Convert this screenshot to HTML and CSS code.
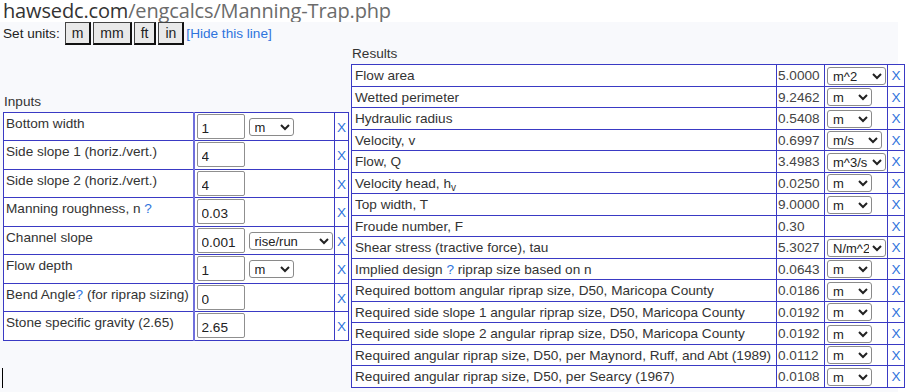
FILE: index.html
```html
<!DOCTYPE html>
<html>
<head>
<meta charset="utf-8">
<link rel="stylesheet" href="styles.css">
</head>
<body>
<div class="urlbar"><span class="host">hawsedc.com</span>/engcalcs/Manning-Trap.php</div>
<div class="page">
  <div class="units">
    <span class="units-label">Set units:</span>
    <button class="ubtn">m</button><button class="ubtn">mm</button><button class="ubtn">ft</button><button class="ubtn">in</button>
    <a class="link hide">[Hide this line]</a>
  </div>
  <div class="cols">
    <div class="col-in">
      <div class="caption">Inputs</div>
      <table class="tin">
        <colgroup><col class="c-lbl"><col class="c-fld"><col class="c-x"></colgroup>
        <tr><td class="lbl">Bottom width</td><td class="fld"><input class="num" value="1"><select class="sel-s"><option>m</option></select></td><td class="x">X</td></tr>
        <tr><td class="lbl">Side slope 1 (horiz./vert.)</td><td class="fld"><input class="num" value="4"></td><td class="x">X</td></tr>
        <tr><td class="lbl">Side slope 2 (horiz./vert.)</td><td class="fld"><input class="num" value="4"></td><td class="x">X</td></tr>
        <tr><td class="lbl">Manning roughness, n <a class="link">?</a></td><td class="fld"><input class="num" value="0.03"></td><td class="x">X</td></tr>
        <tr><td class="lbl">Channel slope</td><td class="fld"><input class="num" value="0.001"><select class="sel-l"><option>rise/run</option></select></td><td class="x">X</td></tr>
        <tr><td class="lbl">Flow depth</td><td class="fld"><input class="num" value="1"><select class="sel-s"><option>m</option></select></td><td class="x">X</td></tr>
        <tr><td class="lbl">Bend Angle<a class="link">?</a> (for riprap sizing)</td><td class="fld"><input class="num" value="0"></td><td class="x">X</td></tr>
        <tr><td class="lbl">Stone specific gravity (2.65)</td><td class="fld"><input class="num" value="2.65"></td><td class="x">X</td></tr>
      </table>
    </div>
    <div class="col-out">
      <div class="caption">Results</div>
      <table class="tout">
        <colgroup><col class="c-rl"><col class="c-rv"><col class="c-ru"><col class="c-rx"></colgroup>
        <tr><td class="rl">Flow area</td><td class="rv">5.0000</td><td class="ru"><select class="sel-r"><option>m^2</option></select></td><td class="rx">X</td></tr>
        <tr><td class="rl">Wetted perimeter</td><td class="rv">9.2462</td><td class="ru"><select class="sel-r sel-m"><option>m</option></select></td><td class="rx">X</td></tr>
        <tr><td class="rl">Hydraulic radius</td><td class="rv">0.5408</td><td class="ru"><select class="sel-r sel-m"><option>m</option></select></td><td class="rx">X</td></tr>
        <tr><td class="rl">Velocity, v</td><td class="rv">0.6997</td><td class="ru"><select class="sel-r sel-ms"><option>m/s</option></select></td><td class="rx">X</td></tr>
        <tr><td class="rl">Flow, Q</td><td class="rv">3.4983</td><td class="ru"><select class="sel-r"><option>m^3/s</option></select></td><td class="rx">X</td></tr>
        <tr><td class="rl">Velocity head, h<sub>v</sub></td><td class="rv">0.0250</td><td class="ru"><select class="sel-r sel-m"><option>m</option></select></td><td class="rx">X</td></tr>
        <tr><td class="rl">Top width, T</td><td class="rv">9.0000</td><td class="ru"><select class="sel-r sel-m"><option>m</option></select></td><td class="rx">X</td></tr>
        <tr><td class="rl">Froude number, F</td><td class="rv">0.30</td><td class="ru"></td><td class="rx">X</td></tr>
        <tr><td class="rl">Shear stress (tractive force), tau</td><td class="rv">5.3027</td><td class="ru"><select class="sel-r"><option>N/m^2</option></select></td><td class="rx">X</td></tr>
        <tr><td class="rl">Implied design <a class="link">?</a> riprap size based on n</td><td class="rv">0.0643</td><td class="ru"><select class="sel-r sel-m"><option>m</option></select></td><td class="rx">X</td></tr>
        <tr><td class="rl">Required bottom angular riprap size, D50, Maricopa County</td><td class="rv">0.0186</td><td class="ru"><select class="sel-r sel-m"><option>m</option></select></td><td class="rx">X</td></tr>
        <tr><td class="rl">Required side slope 1 angular riprap size, D50, Maricopa County</td><td class="rv">0.0192</td><td class="ru"><select class="sel-r sel-m"><option>m</option></select></td><td class="rx">X</td></tr>
        <tr><td class="rl">Required side slope 2 angular riprap size, D50, Maricopa County</td><td class="rv">0.0192</td><td class="ru"><select class="sel-r sel-m"><option>m</option></select></td><td class="rx">X</td></tr>
        <tr><td class="rl">Required angular riprap size, D50, per Maynord, Ruff, and Abt (1989)</td><td class="rv">0.0112</td><td class="ru"><select class="sel-r sel-m"><option>m</option></select></td><td class="rx">X</td></tr>
        <tr><td class="rl">Required angular riprap size, D50, per Searcy (1967)</td><td class="rv">0.0108</td><td class="ru"><select class="sel-r sel-m"><option>m</option></select></td><td class="rx">X</td></tr>
      </table>
    </div>
  </div>
  <div class="caret"></div>
</div>
</body>
</html>
```

FILE: styles.css
```css
html, body {
  margin: 0;
  padding: 0;
  background: #ffffff;
}
body {
  font-family: "Liberation Sans", Arial, sans-serif;
  font-size: 13.6px;
  color: #222;
  width: 907px;
  height: 392px;
  overflow: hidden;
}
.urlbar {
  font-family: "Open Sans", sans-serif;
  font-size: 20px;
  line-height: 21px;
  height: 22px;
  color: #6b6b6b;
  padding-left: 3px;
  letter-spacing: -0.15px;
  white-space: nowrap;
  overflow: hidden;
}
.host { color: #333; }
.page {
  position: relative;
  background: #f8f9fc;
  width: 898px;
  height: 370px;
}
.units {
  display: flex;
  align-items: center;
  height: 23px;
  padding-left: 3px;
}
.units-label { margin-right: 5px; }
.ubtn {
  font-family: "Liberation Sans", Arial, sans-serif;
  font-size: 14px;
  color: #222;
  background: #e9e9e9;
  border-top: 1px solid #444;
  border-left: 1px solid #444;
  border-right: 2px solid #111;
  border-bottom: 2px solid #111;
  height: 23px;
  padding: 0 6px;
  margin: 0 2px 0 0;
  border-radius: 0;
}
.link { color: #2f74dc; text-decoration: none; cursor: pointer; }
.cols {
  display: flex;
  align-items: center;
  gap: 2px;
  padding-left: 3px;
  height: 344px;
}
.caption {
  height: 18px;
  line-height: 16px;
  padding-left: 1px;
  color: #333;
}
table {
  border-collapse: collapse;
  background: #fff;
  table-layout: fixed;
}
td {
  border: 1px solid #3a3ac4;
  padding: 0;
  overflow: hidden;
}
.tin { width: 345px; }
.c-lbl { width: 190px; }
.c-fld { width: 141px; }
.c-x { width: 14px; }
.tin tr { height: 28.5px; }
.tin .lbl {
  vertical-align: top;
  padding: 3px 0 0 2px;
  white-space: nowrap;
  color: #333;
}
.tin .fld {
  padding: 1px 0 0 2px;
  vertical-align: top;
  white-space: nowrap;
  border-left: 2px solid #7070dc;
}
.num {
  font-family: "Liberation Sans", Arial, sans-serif;
  font-size: 13.6px;
  color: #222;
  width: 48px;
  height: 25px;
  box-sizing: border-box;
  border: 1px solid #8f8f8f;
  border-radius: 2px;
  padding: 4px 4px 0;
  margin: 0;
  vertical-align: top;
}
select {
  font-family: "Liberation Sans", Arial, sans-serif;
  font-size: 13px;
  color: #222;
  background: #fff;
  border: 1px solid #8a8a8a;
  border-radius: 3px;
  box-sizing: border-box;
  padding: 0 0 0 1px;
  margin: 0;
}
.sel-s {
  width: 45px;
  height: 18px;
  margin: 4px 0 0 4px;
  vertical-align: top;
}
.sel-l {
  width: 84px;
  height: 18px;
  margin: 4px 0 0 4px;
  vertical-align: top;
}
.tin .x {
  color: #2f74dc;
  text-align: center;
  vertical-align: middle;
  padding-top: 2px;
}
.tout { width: 553px; }
.c-rl { width: 425px; }
.c-rv { width: 48px; }
.c-ru { width: 63px; }
.c-rx { width: 17px; }
.tout tr { height: 21.5px; }
.tout .rl {
  padding-left: 3px;
  white-space: nowrap;
  color: #333;
}
.tout sub { font-size: 10px; vertical-align: -3px; line-height: 0; }
.tout .rv {
  padding-left: 1px;
  color: #444;
  white-space: nowrap;
}
.tout .ru {
  padding-left: 2px;
}
.sel-r {
  width: 59px;
  height: 18px;
  display: block;
}
.sel-m { width: 45px; }
.sel-ms { width: 55px; }
.tout .rx {
  color: #2f74dc;
  text-align: center;
}
.caret {
  position: absolute;
  left: 2px;
  top: 346px;
  width: 1px;
  height: 20px;
  background: #000;
}
```
